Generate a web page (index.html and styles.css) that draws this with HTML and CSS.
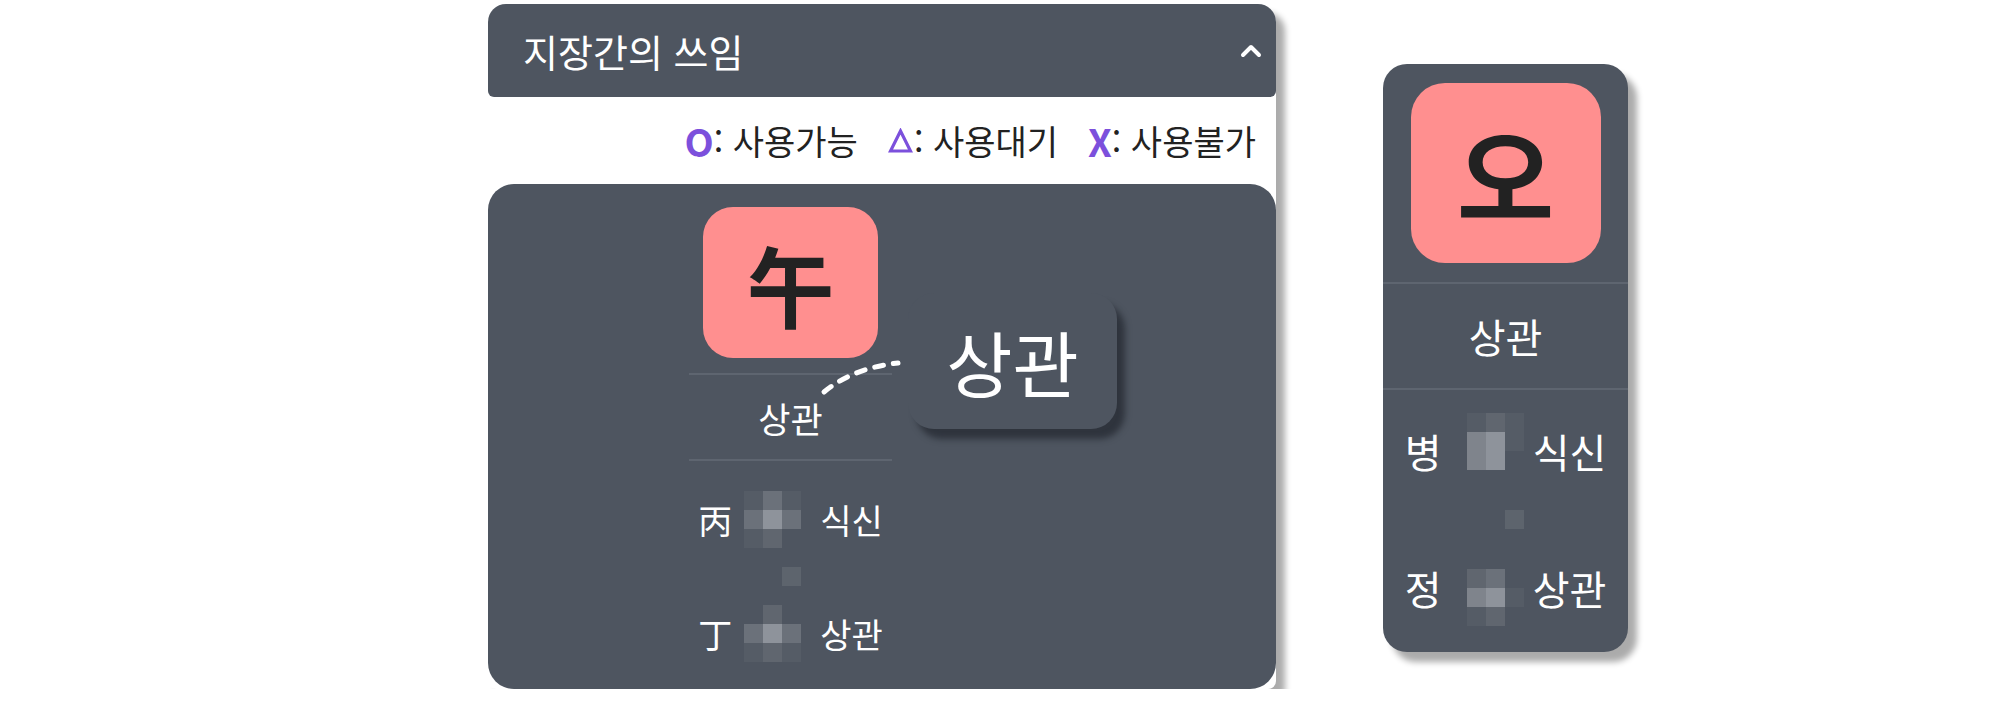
FILE: index.html
```html
<!DOCTYPE html>
<html lang="ko">
<head>
    <meta charset="UTF-8">
    <meta name="viewport" content="width=device-width, initial-scale=1.0">
    <title>지장간의 쓰임</title>
    <link rel="stylesheet" href="styles.css">
</head>
<body>
    <div class="stage">
        <section class="panel">
            <div class="panel-header">
                <h2 class="panel-title">지장간의 쓰임</h2>
                <svg class="chevron" width="22" height="14" viewBox="0 0 22 14">
                    <polyline points="3,11 11,3 19,11" fill="none" stroke="#fff" stroke-width="4" stroke-linecap="round" stroke-linejoin="round"/>
                </svg>
            </div>

            <div class="legend">
                <span class="legend-item"><b>O</b>: 사용가능</span>
                <span class="legend-item">
                    <svg class="triangle" width="25" height="25" viewBox="0 0 25 25">
                        <polygon points="12.5,3 22.5,23 2.5,23" fill="none" stroke="#7c50dc" stroke-width="3.2" stroke-linejoin="miter"/>
                    </svg>: 사용대기
                </span>
                <span class="legend-item"><b>X</b>: 사용불가</span>
            </div>

            <div class="panel-body">
                <div class="pillar">
                    <div class="branch">午</div>
                    <div class="rule"></div>
                    <div class="god">상관</div>
                    <div class="rule"></div>

                    <div class="stems">
                        <span class="stem">丙</span>
                        <div class="mosaic">
                            <i class="c1"></i><i class="c3"></i><i class="c1"></i>
                            <i class="c3"></i><i class="c5"></i><i class="c3"></i>
                            <i class="c1"></i><i class="c2"></i><i class="c0"></i>
                        </div>
                        <span class="stem-god">식신</span>

                        <div class="dot"></div>

                        <span class="stem">丁</span>
                        <div class="mosaic">
                            <i class="c0"></i><i class="c2"></i><i class="c0"></i>
                            <i class="c3"></i><i class="c5"></i><i class="c3"></i>
                            <i class="c1"></i><i class="c2"></i><i class="c1"></i>
                        </div>
                        <span class="stem-god">상관</span>
                    </div>
                </div>

                <!-- callout from the pillar label -->
                <svg class="callout-line" width="90" height="46" viewBox="0 0 90 46">
                    <path d="M6 38 Q 35 14 80 9" fill="none" stroke="#fff" stroke-width="5" stroke-linecap="round" stroke-dasharray="9 10"/>
                </svg>
                <div class="callout">상관</div>
            </div>
        </section>

        <section class="zoom-card">
            <div class="branch big">오</div>
            <div class="rule"></div>
            <div class="god big">상관</div>
            <div class="rule"></div>

            <div class="stems big">
                <span class="stem">병</span>
                <div class="mosaic lift">
                    <i class="c1"></i><i class="c2"></i><i class="c1"></i>
                    <i class="c4"></i><i class="c5"></i><i class="c1"></i>
                    <i class="c4"></i><i class="c5"></i><i class="c0"></i>
                </div>
                <span class="stem-god">식신</span>

                <div class="dot"></div>

                <span class="stem">정</span>
                <div class="mosaic drop">
                    <i class="c2"></i><i class="c3"></i><i class="c0"></i>
                    <i class="c4"></i><i class="c5"></i><i class="c1"></i>
                    <i class="c1"></i><i class="c2"></i><i class="c0"></i>
                </div>
                <span class="stem-god">상관</span>
            </div>
        </section>
    </div>
</body>
</html>
```

FILE: styles.css
```css
body {
    margin: 0;
    background-color: #fff;
    font-family: "Noto Sans CJK KR", "Noto Sans", sans-serif;
    color: #222;
}
.stage {
    display: flex;
    align-items: flex-start;
    gap: 107px;
    padding: 4px 0 0 488px;
}
.panel {
    width: 788px;
    background-color: #fff;
    border-radius: 18px 18px 8px 8px;
    box-shadow: 9px 9px 6px rgba(0, 0, 0, 0.33);
}
.panel-header {
    display: flex;
    align-items: center;
    justify-content: space-between;
    height: 93px;
    padding: 0 14px 0 35px;
    background-color: #4e5560;
    border-radius: 18px 18px 6px 6px;
    color: #fff;
}
.panel-title {
    margin: 0;
    font-size: 38px;
    font-weight: 400;
    line-height: 1;
}
.chevron {
    display: block;
}
.legend {
    display: flex;
    justify-content: flex-end;
    align-items: center;
    gap: 30px;
    height: 87px;
    padding-right: 20px;
    font-size: 34px;
    line-height: 1;
}
.legend-item {
    display: flex;
    align-items: center;
}
.legend b {
    color: #7c50dc;
    font-weight: 700;
    font-size: 38px;
}
.triangle {
    display: block;
    margin-right: 1px;
}
.panel-body {
    position: relative;
    height: 505px;
    box-sizing: border-box;
    padding-left: 201px;
    background-color: #4e5560;
    border-radius: 26px;
}
.pillar {
    display: flex;
    flex-direction: column;
    align-items: center;
    width: 203px;
}
.branch {
    display: flex;
    align-items: center;
    justify-content: center;
    width: 175px;
    height: 151px;
    margin-top: 23px;
    background-color: #ff8f8f;
    border-radius: 30px;
    font-size: 88px;
    font-weight: 700;
    line-height: 1;
    color: #222;
}
.rule {
    align-self: stretch;
    height: 2px;
    background-color: #5e6570;
}
.branch + .rule {
    margin-top: 15px;
}
.god {
    display: flex;
    align-items: center;
    justify-content: center;
    height: 84px;
    font-size: 35px;
    line-height: 1;
    color: #fff;
}
.stems {
    display: grid;
    grid-template-columns: 34px 57px auto;
    column-gap: 12px;
    row-gap: 19px;
    align-items: center;
    margin-top: 30px;
    font-size: 34px;
    line-height: 1;
    color: #fff;
}
.stem {
    grid-column: 1;
}
.stem-god {
    margin-left: 7px;
    white-space: nowrap;
}
.mosaic {
    display: grid;
    grid-template-columns: repeat(3, 19px);
    grid-auto-rows: 19px;
}
.mosaic i {
    display: block;
}
.c0 { background-color: transparent; }
.c1 { background-color: #555c66; }
.c2 { background-color: #60666f; }
.c3 { background-color: #6b717a; }
.c4 { background-color: #7f848c; }
.c5 { background-color: #8e939b; }
.dot {
    grid-column: 2;
    justify-self: end;
    width: 19px;
    height: 19px;
    background-color: #5d646d;
}
.callout-line {
    position: absolute;
    left: 330px;
    top: 170px;
}
.callout {
    position: absolute;
    left: 420px;
    top: 109px;
    display: flex;
    align-items: center;
    justify-content: center;
    width: 209px;
    height: 136px;
    background-color: #4e5560;
    border-radius: 26px;
    box-shadow: 8px 10px 6px rgba(22, 26, 32, 0.55);
    font-size: 72px;
    line-height: 1;
    color: #fff;
}

/* right side enlarged card */
.zoom-card {
    display: flex;
    flex-direction: column;
    align-items: center;
    width: 245px;
    height: 588px;
    margin-top: 60px;
    background-color: #4e5560;
    border-radius: 24px;
    box-shadow: 9px 10px 6px rgba(0, 0, 0, 0.33);
}
.branch.big {
    width: 190px;
    height: 180px;
    margin-top: 19px;
    border-radius: 34px;
    font-size: 106px;
}
.branch.big + .rule {
    margin-top: 19px;
}
.god.big {
    height: 104px;
    font-size: 40px;
}
.stems.big {
    grid-template-columns: 40px 57px auto;
    column-gap: 22px;
    row-gap: 21px;
    margin-top: 23px;
    font-size: 40px;
}
.stems.big .stem-god {
    margin-left: -13px;
}
.mosaic.lift {
    margin-bottom: 19px;
}
.mosaic.drop {
    margin-top: 19px;
}
```
